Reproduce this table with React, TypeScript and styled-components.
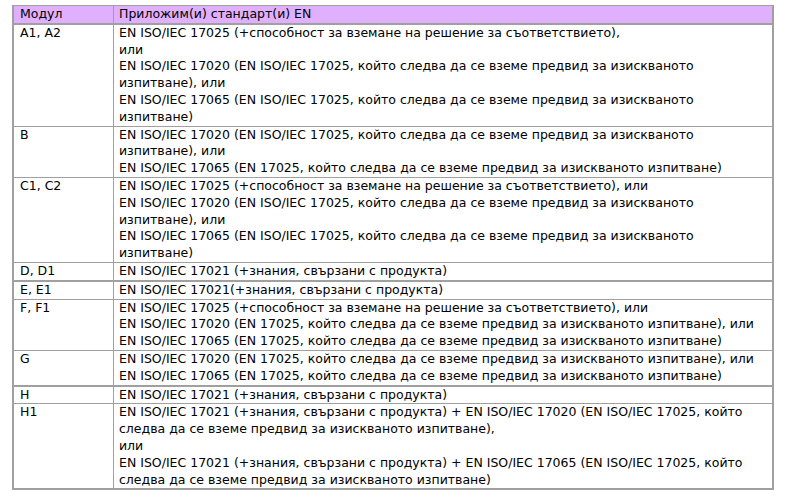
import React from "react";
import styled, { createGlobalStyle } from "styled-components";

const GlobalStyle = createGlobalStyle`
  html, body { margin: 0; padding: 0; background: #ffffff; }
  body {
    font-family: "DejaVu Sans", Verdana, sans-serif;
    font-size: 12.5px;
    color: #000000;
  }
`;

const Page = styled.div`
  padding: 5px 0 0 12px;
`;

const Table = styled.div`
  width: 762px;
  box-sizing: border-box;
  border: 2px solid #a0a0a0;
  border-top-width: 1px;
  display: flex;
  flex-direction: column;
`;

const Row = styled.div<{ $head?: boolean; $thick?: boolean; $first?: boolean }>`
  display: grid;
  grid-template-columns: 100px 1fr;
  background: ${(p) => (p.$head ? "#e0b0ff" : "#ffffff")};
  border-top: ${(p) => (p.$first ? "0" : p.$thick ? "2px" : "1px")} solid #a0a0a0;
  line-height: 16.8px;
`;

const ModCell = styled.div`
  padding: 0 4px 0 6px;
  border-right: 1px solid #a0a0a0;
  white-space: nowrap;
`;

const StdCell = styled.div`
  padding: 0 4px 0 5px;
  display: flex;
  flex-direction: column;
`;

const Line = styled.span`
  display: block;
  white-space: nowrap;
`;

type Entry = { mod: string; lines: string[]; thick?: boolean };

const L17020a = "EN ISO/IEC 17020 (EN ISO/IEC 17025, който следва да се вземе предвид за изискваното";
const L17065a = "EN ISO/IEC 17065 (EN ISO/IEC 17025, който следва да се вземе предвид за изискваното";
const L17025 = "EN ISO/IEC 17025 (+способност за вземане на решение за съответствието), или";
const L17020b = "EN ISO/IEC 17020 (EN 17025, който следва да се вземе предвид за изискваното изпитване), или";
const L17065b = "EN ISO/IEC 17065 (EN 17025, който следва да се вземе предвид за изискваното изпитване)";
const L17021 = "EN ISO/IEC 17021 (+знания, свързани с продукта)";

const rows: Entry[] = [
  {
    mod: "A1, A2",
    lines: [
      "EN ISO/IEC 17025 (+способност за вземане на решение за съответствието),",
      "или",
      L17020a,
      "изпитване), или",
      L17065a,
      "изпитване)",
    ],
    thick: true,
  },
  {
    mod: "B",
    lines: [L17020a, "изпитване), или", L17065b],
  },
  {
    mod: "C1, C2",
    lines: [L17025, L17020a, "изпитване), или", L17065a, "изпитване)"],
  },
  { mod: "D, D1", lines: [L17021] },
  { mod: "E, E1", lines: ["EN ISO/IEC 17021(+знания, свързани с продукта)"], thick: true },
  { mod: "F, F1", lines: [L17025, L17020b, L17065b] },
  { mod: "G", lines: [L17020b, L17065b] },
  { mod: "H", lines: [L17021], thick: true },
  {
    mod: "H1",
    lines: [
      "EN ISO/IEC 17021 (+знания, свързани с продукта) + EN ISO/IEC 17020 (EN ISO/IEC 17025, който",
      "следва да се вземе предвид за изискваното изпитване),",
      "или",
      "EN ISO/IEC 17021 (+знания, свързани с продукта) + EN ISO/IEC 17065 (EN ISO/IEC 17025, който",
      "следва да се вземе предвид за изискваното изпитване)",
    ],
  },
];

export default function App() {
  return (
    <>
      <GlobalStyle />
      <Page>
        <Table>
          <Row $head $first>
            <ModCell>Модул</ModCell>
            <StdCell>
              <Line>Приложим(и) стандарт(и) EN</Line>
            </StdCell>
          </Row>
          {rows.map((r) => (
            <Row key={r.mod} $thick={r.thick}>
              <ModCell>{r.mod}</ModCell>
              <StdCell>
                {r.lines.map((l, j) => (
                  <Line key={j}>{l}</Line>
                ))}
              </StdCell>
            </Row>
          ))}
        </Table>
      </Page>
    </>
  );
}
